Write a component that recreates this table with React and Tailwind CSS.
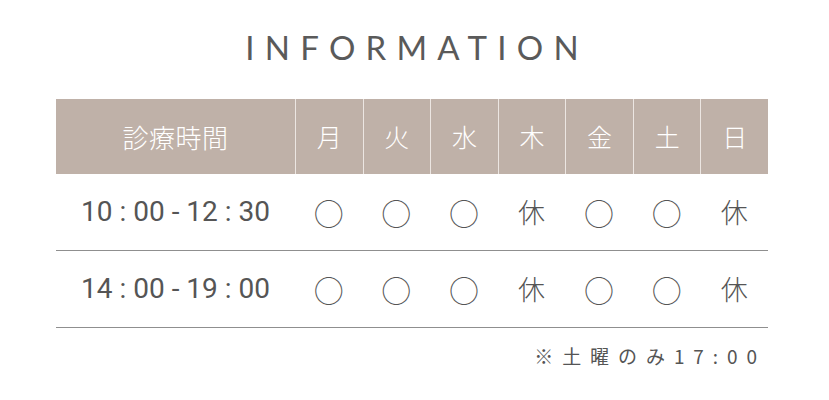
import React from "react";

const days = ["月", "火", "水", "木", "金", "土", "日"];

const rows = [
  { time: "10 : 00 - 12 : 30", marks: ["○", "○", "○", "休", "○", "○", "休"] },
  { time: "14 : 00 - 19 : 00", marks: ["○", "○", "○", "休", "○", "○", "休"] },
];

const jp = { fontFamily: '"Noto Sans CJK JP", "Noto Sans", sans-serif' };

export default function App() {
  return (
    <main className="min-h-[400px] w-[829px] bg-white text-[#555]">
      <section className="ml-[56px] w-[712px] pt-[29px]">
        {/* Title */}
        <h2
          className="text-center text-[33px] font-normal leading-[36px] tracking-[0.31em] pl-[0.31em] text-[#5a5a5a]"
          style={{ fontFamily: 'Lato, "Noto Sans", sans-serif' }}
        >
          INFORMATION
        </h2>

        {/* Schedule */}
        <div className="mt-[34px]">
          <div
            className="grid grid-cols-[239px_repeat(7,1fr)] h-[75px] bg-[#bfb1a8] text-white"
            style={jp}
          >
            <div className="flex items-center justify-center text-[26px] font-light tracking-[0.02em]">
              診療時間
            </div>
            {days.map((d) => (
              <div
                key={d}
                className="flex items-center justify-center border-l border-[#ece6e2] text-[25px] font-light"
              >
                {d}
              </div>
            ))}
          </div>

          {rows.map((r, i) => (
            <div
              key={i}
              className="grid grid-cols-[239px_repeat(7,1fr)] h-[77px] border-b border-[#8f8f8f] items-center"
            >
              <div
                className="text-center text-[28px] text-[#555]"
                style={{ fontFamily: 'Roboto, "Liberation Sans", sans-serif' }}
              >
                {r.time}
              </div>
              {r.marks.map((m, j) => (
                <div
                  key={j}
                  className={`text-center text-[#555] font-light ${m === "休" ? "text-[27px]" : "text-[30px]"}`}
                  style={jp}
                >
                  {m}
                </div>
              ))}
            </div>
          ))}

          <p
            className="mt-[14px] pr-[2px] text-right text-[19px] tracking-[0.47em] text-[#555]"
            style={jp}
          >
            ※土曜のみ17:00
          </p>
        </div>
      </section>
    </main>
  );
}
